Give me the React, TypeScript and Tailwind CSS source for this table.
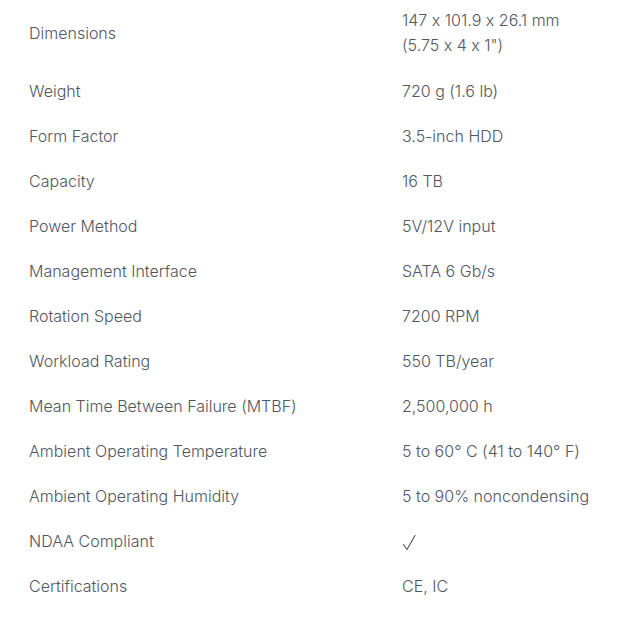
import React from 'react';

const SPECS: { label: string; value: string[] }[] = [
  { label: 'Dimensions', value: ['147 x 101.9 x 26.1 mm', '(5.75 x 4 x 1")'] },
  { label: 'Weight', value: ['720 g (1.6 lb)'] },
  { label: 'Form Factor', value: ['3.5-inch HDD'] },
  { label: 'Capacity', value: ['16 TB'] },
  { label: 'Power Method', value: ['5V/12V input'] },
  { label: 'Management Interface', value: ['SATA 6 Gb/s'] },
  { label: 'Rotation Speed', value: ['7200 RPM'] },
  { label: 'Workload Rating', value: ['550 TB/year'] },
  { label: 'Mean Time Between Failure (MTBF)', value: ['2,500,000 h'] },
  { label: 'Ambient Operating Temperature', value: ['5 to 60° C (41 to 140° F)'] },
  { label: 'Ambient Operating Humidity', value: ['5 to 90% noncondensing'] },
  { label: 'NDAA Compliant', value: ['✓'] },
  { label: 'Certifications', value: ['CE, IC'] },
];

// thin check mark, the font glyph is too small and heavy
const Check = () => (
  <svg width="14" height="25" viewBox="0 0 14 25" className="block" aria-label="✓">
    <path d="M1.5 15.5 L5 20.5 L13 6.5" fill="none" stroke="#50565e" strokeWidth="1.1" strokeLinecap="round" strokeLinejoin="round" />
  </svg>
);

const App: React.FC = () => {
  return (
    <div className="bg-white min-h-screen text-[#50565e] text-[16px] leading-[25px] font-light [font-feature-settings:'calt'_0]" style={{ fontFamily: 'Inter, "Noto Sans", sans-serif' }}>
      <div className="pl-[29px] pt-[8px]">
        {SPECS.map((spec, i) => (
          <div key={spec.label} className={`flex items-center ${i === 0 ? 'pb-[11px]' : 'py-[10px]'}`}>
            <div className="w-[373px] shrink-0">{spec.label}</div>
            <div>
              {spec.value.map((line) =>
                line === '✓' ? <Check key={line} /> : <div key={line}>{line}</div>
              )}
            </div>
          </div>
        ))}
      </div>
    </div>
  );
};

export default App;
